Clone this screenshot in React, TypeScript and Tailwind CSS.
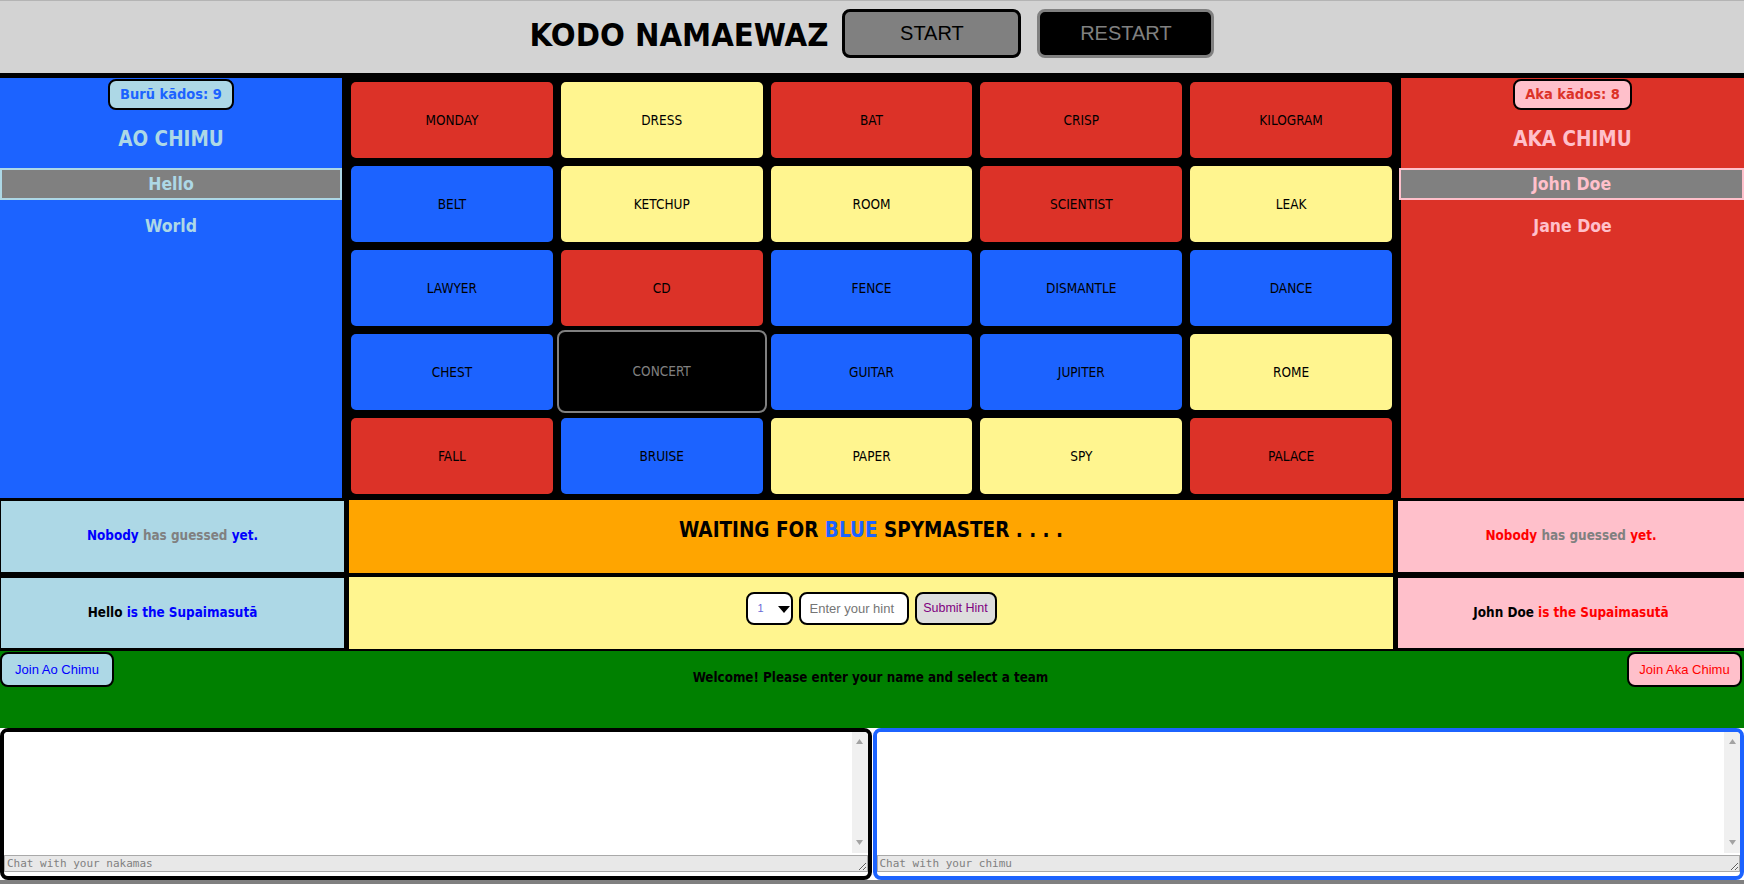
import React from "react";

const T = "font-['DejaVu_Sans_Condensed','DejaVu_Sans',sans-serif]";
const A = "font-['Liberation_Sans',Arial,sans-serif]";
const M = "font-['DejaVu_Sans_Mono',monospace]";

type C = "r" | "b" | "y" | "k";
const tiles: [string, C][] = [
  ["MONDAY", "r"], ["DRESS", "y"], ["BAT", "r"], ["CRISP", "r"], ["KILOGRAM", "r"],
  ["BELT", "b"], ["KETCHUP", "y"], ["ROOM", "y"], ["SCIENTIST", "r"], ["LEAK", "y"],
  ["LAWYER", "b"], ["CD", "r"], ["FENCE", "b"], ["DISMANTLE", "b"], ["DANCE", "b"],
  ["CHEST", "b"], ["CONCERT", "k"], ["GUITAR", "b"], ["JUPITER", "b"], ["ROME", "y"],
  ["FALL", "r"], ["BRUISE", "b"], ["PAPER", "y"], ["SPY", "y"], ["PALACE", "r"],
];

const tileCls: Record<C, string> = {
  r: "bg-[#dc3228] text-black rounded-[5px]",
  b: "bg-[#1c63ff] text-black rounded-[5px]",
  y: "bg-[#fff58f] text-black rounded-[5px]",
  k: "bg-black text-[#808080] border-2 border-[#808080] rounded-[8px] -mx-[4px] -mt-[4px] -mb-[3px]",
};

function ChatBox({ border, placeholder }: { border: string; placeholder: string }) {
  return (
    <div className={`flex-1 h-full border-4 ${border} rounded-[8px] bg-white flex flex-col overflow-hidden`}>
      <div className="flex h-[121px]">
        <textarea readOnly className="flex-1 h-full resize-none overflow-hidden outline-none bg-white" />
        <div className="w-[16px] h-full bg-[#f0f0f0] flex flex-col items-center justify-between pt-[7px] pb-[8px]">
          <svg width="7" height="5" viewBox="0 0 7 5">
            <path d="M3.5 0 L7 5 L0 5 Z" fill="#a3a3a3" />
          </svg>
          <svg width="7" height="5" viewBox="0 0 7 5">
            <path d="M0 0 L7 0 L3.5 5 Z" fill="#a3a3a3" />
          </svg>
        </div>
      </div>
      <textarea
        rows={1}
        placeholder={placeholder}
        className={`${M} mt-[2px] w-full h-[17px] min-h-[17px] bg-[#e8e8e8] border border-[#a9a9a9] px-[2px] text-[11px] leading-[15px] outline-none placeholder-[#808080] text-black`}
      />
    </div>
  );
}

export default function App() {
  return (
    <div className="min-h-screen bg-[#808080] flex flex-col">
      {/* Header */}
      <header className="h-[73px] bg-[#d3d3d3] border-t border-[#b4b4b4] flex items-center justify-center pb-[8px]">
        <h1 className={`${T} text-[32.5px] leading-none font-bold text-black mt-[5px] mr-[14px]`}>KODO NAMAEWAZ</h1>
        <button className={`${A} w-[179px] h-[49px] bg-[#808080] border-[3px] border-black rounded-[8px] text-[20px] text-black`}>
          START
        </button>
        <button className={`${A} ml-[16px] w-[177px] h-[49px] bg-black border-[3px] border-[#808080] rounded-[8px] text-[20px] text-[#808080]`}>
          RESTART
        </button>
      </header>

      {/* Board section */}
      <div className="h-[425px] bg-black pt-[5px] flex">
        <div className={`${T} w-[342px] bg-[#1c63ff] flex flex-col items-center`}>
          <div className="mt-[1px] w-[126px] h-[31px] flex items-center justify-center bg-[#add8e6] border-2 border-black rounded-[8px] text-[14.5px] font-bold text-[#1c63ff]">
            Burū kādos: 9
          </div>
          <div className="h-[58px] flex items-center text-[20.5px] font-bold text-[#add8e6]">AO CHIMU</div>
          <div className="w-full h-[32px] border-2 border-[#add8e6] bg-[#808080] flex items-center justify-center text-[17.5px] font-bold text-[#add8e6]">
            Hello
          </div>
          <div className="h-[52px] flex items-center text-[17.5px] font-bold text-[#add8e6]">World</div>
        </div>

        <div className="flex-1 grid grid-cols-5 grid-rows-5 gap-[8px] px-[9px] pt-[4px] pb-[4px]">
          {tiles.map(([w, c]) => (
            <div key={w} className={`${T} ${tileCls[c]} flex items-center justify-center text-[13.5px]`}>
              {w}
            </div>
          ))}
        </div>

        <div className={`${T} w-[343px] bg-[#dc3228] flex flex-col items-center`}>
          <div className="mt-[1px] w-[119px] h-[31px] flex items-center justify-center bg-[#ffc0cb] border-2 border-black rounded-[8px] text-[14.5px] font-bold text-[#dc3228]">
            Aka kādos: 8
          </div>
          <div className="h-[58px] flex items-center text-[20.5px] font-bold text-[#ffc0cb]">AKA CHIMU</div>
          <div className="-ml-[2px] w-[calc(100%+2px)] h-[32px] border-2 border-[#ffc0cb] bg-[#808080] flex items-center justify-center text-[17.5px] font-bold text-[#ffc0cb]">
            John Doe
          </div>
          <div className="h-[52px] flex items-center text-[17.5px] font-bold text-[#ffc0cb]">Jane Doe</div>
        </div>
      </div>

      {/* Info section */}
      <div className={`${T} h-[153px] bg-black grid grid-cols-[344px_1fr_346px] grid-rows-[73px_72px] gap-x-[5px] gap-y-[4px] py-[2px]`}>
        <div className="my-[1px] bg-[#add8e6] border-l border-black flex items-center justify-center text-[13.4px] font-bold">
          <span className="text-[#0000ff]">Nobody</span>
          <span className="text-[#808080]">&nbsp;has guessed&nbsp;</span>
          <span className="text-[#0000ff]">yet.</span>
        </div>
        <div className="bg-[#ffa500] flex justify-center pt-[18px]">
          <h2 className="text-[20.5px] leading-[24px] font-bold text-black">
            WAITING FOR <span className="text-[#1c63ff]">BLUE</span> SPYMASTER . . . .
          </h2>
        </div>
        <div className="my-[1px] bg-[#ffc0cb] flex items-center justify-center text-[13.4px] font-bold">
          <span className="text-[#ff0000]">Nobody</span>
          <span className="text-[#808080]">&nbsp;has guessed&nbsp;</span>
          <span className="text-[#ff0000]">yet.</span>
        </div>

        <div className="my-[1px] bg-[#add8e6] border-l border-black flex items-center justify-center text-[13.4px] font-bold">
          <span className="text-black">Hello</span>
          <span className="text-[#0000ff]">&nbsp;is the Supaimasutā</span>
        </div>
        <div className={`${A} bg-[#fff58f] flex justify-center items-start pt-[15px] gap-[6px]`}>
          <div className="relative w-[47px] h-[33px] border-2 border-black rounded-[8px] bg-white">
            <select className="appearance-none w-full h-full bg-transparent pl-[10px] text-[11px] text-[#6b6bd6] outline-none">
              <option>1</option>
            </select>
            <svg className="absolute right-[1px] top-[12px] pointer-events-none" width="12" height="7" viewBox="0 0 12 7">
              <path d="M0 0 L12 0 L6 7 Z" fill="#000" />
            </svg>
          </div>
          <input
            placeholder="Enter your hint"
            className="w-[110px] h-[33px] border-2 border-black rounded-[8px] bg-white px-[9px] text-[13px] outline-none placeholder-[#757575]"
          />
          <button className="w-[82px] h-[33px] border-2 border-black rounded-[8px] bg-[#dddddd] text-[12.5px] text-[#800080]">
            Submit Hint
          </button>
        </div>
        <div className="my-[1px] bg-[#ffc0cb] flex items-center justify-center text-[13.4px] font-bold">
          <span className="text-black">John Doe</span>
          <span className="text-[#ff0000]">&nbsp;is the Supaimasutā</span>
        </div>
      </div>

      {/* Join section */}
      <div className="h-[77px] bg-[#008000] flex items-start">
        <button className={`${A} w-[114px] h-[35px] mt-[1px] bg-[#add8e6] border-2 border-black rounded-[8px] text-[13px] text-[#0000ff]`}>
          Join Ao Chimu
        </button>
        <div className={`${T} flex-1 text-center pt-[17px] text-[13.3px] font-bold text-black`}>
          Welcome! Please enter your name and select a team
        </div>
        <button className={`${A} w-[115px] h-[35px] mt-[1px] mr-[2px] bg-[#ffc0cb] border-2 border-black rounded-[8px] text-[13px] text-[#ff0000]`}>
          Join Aka Chimu
        </button>
      </div>

      {/* Chat section */}
      <div className="h-[152px] bg-white flex gap-px">
        <ChatBox border="border-black" placeholder="Chat with your nakamas" />
        <ChatBox border="border-[#1c63ff]" placeholder="Chat with your chimu" />
      </div>
    </div>
  );
}
